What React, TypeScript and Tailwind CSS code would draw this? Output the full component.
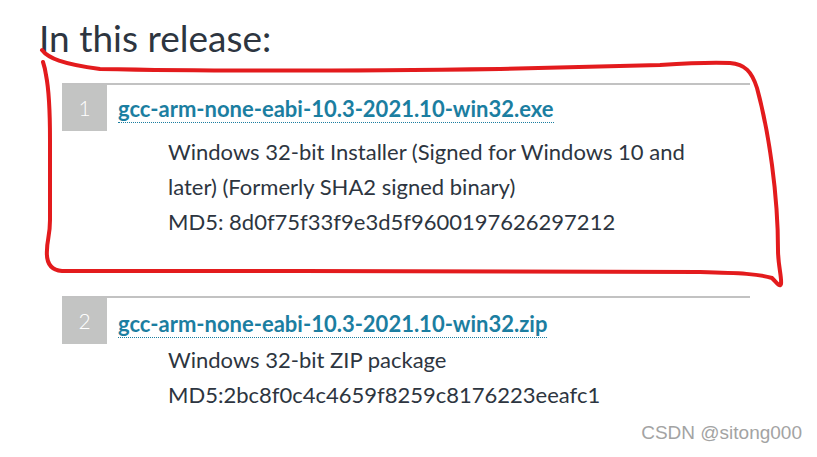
import React from 'react';

interface ReleaseItem {
  n: number;
  file: string;
  lines: string[];
}

const items: ReleaseItem[] = [
  {
    n: 1,
    file: 'gcc-arm-none-eabi-10.3-2021.10-win32.exe',
    lines: [
      'Windows 32-bit Installer (Signed for Windows 10 and',
      'later) (Formerly SHA2 signed binary)',
      'MD5: 8d0f75f33f9e3d5f9600197626297212',
    ],
  },
  {
    n: 2,
    file: 'gcc-arm-none-eabi-10.3-2021.10-win32.zip',
    lines: ['Windows 32-bit ZIP package', 'MD5:2bc8f0c4c4659f8259c8176223eeafc1'],
  },
];

const Item: React.FC<{ item: ReleaseItem; first?: boolean }> = ({ item, first }) => (
  <li className={`flex border-t-2 border-[#c2c2c2] ${first ? 'pb-[57px]' : ''}`}>
    <div className="flex h-[46px] w-[45px] shrink-0 items-center justify-center bg-[#c3c4c3] text-[21px] font-light text-white">
      {item.n}
    </div>
    <div className="pl-[11px]">
      <a
        href="#"
        className={`block w-fit border-b border-dotted border-[#1b7ea1] text-[22px] leading-[26px] font-bold text-[#1b7ea1] ${first ? 'mt-[11px]' : 'mt-[13px]'}`}
      >
        {item.file}
      </a>
      <div
        className={`pl-[50px] text-[22px] leading-[35px] text-[#2d3540] ${first ? 'mt-[11px]' : 'mt-[4px]'}`}
      >
        {item.lines.map((l) => (
          <div key={l}>{l}</div>
        ))}
      </div>
    </div>
  </li>
);

export default function App() {
  return (
    <div
      className="relative h-[457px] w-[817px] overflow-hidden bg-white"
      style={{ fontFamily: 'Lato, "Noto Sans", sans-serif' }}
    >
      <h2 className="pl-[39px] pt-[14px] text-[37px] leading-[48px] font-normal text-[#2d3540]">
        In this release:
      </h2>
      <ul className="ml-[62px] mt-[21px] w-[688px]">
        {items.map((it, i) => (
          <Item key={it.n} item={it} first={i === 0} />
        ))}
      </ul>

      <svg className="pointer-events-none absolute left-0 top-0" width="817" height="457">
        <path
          d="M42,50 C48,58 62,64 100,69 C200,71 350,71 500,69 C560,68 620,66 660,65 C690,63 710,62 730,63 C745,64 752,72 757,88 C763,110 768,135 772,165 C776,195 778,225 778,250 C778,265 782,278 781,284 C780,288 776,282 772,278 C760,274 740,273 700,272 L300,271 C200,271 120,271 62,271 C50,270 46,262 47,250 C47,240 50,236 50,220 L50,140 C50,110 49,90 46,75 C45,68 44,65 43,62"
          fill="none"
          stroke="#e31b1d"
          strokeWidth="4"
          strokeLinecap="round"
          strokeLinejoin="round"
        />
      </svg>

      <div
        className="absolute right-[15px] bottom-[10px] text-[19px] text-[#a3a3a3]"
        style={{ fontFamily: '"Liberation Sans", Arial, sans-serif' }}
      >
        CSDN @sitong000
      </div>
    </div>
  );
}
